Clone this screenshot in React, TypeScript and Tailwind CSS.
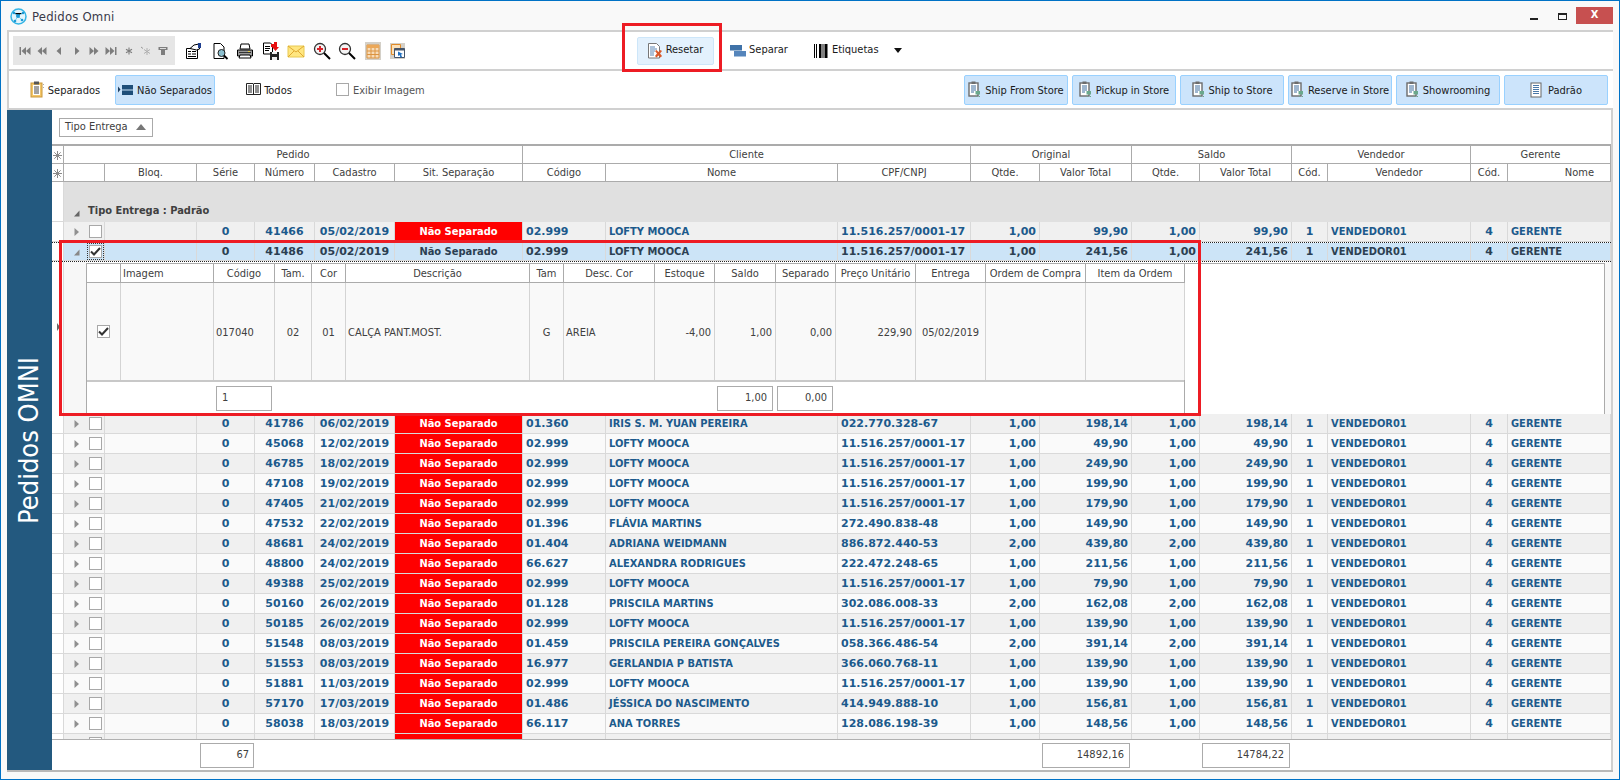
import React from "react";

const COLS = "grid grid-cols-[12px_41px_92px_58px_60px_80px_128px_83px_232px_133px_69px_92px_68px_92px_36px_143px_37px_103px]";
const DCOLS = "grid grid-cols-[34px_93px_61px_37px_34px_184px_34px_91px_60px_61px_60px_80px_70px_100px_99px]";
const FONT = "[font-family:'DejaVu_Sans_Condensed','DejaVu_Sans',sans-serif]";
const BOLD = "[font-family:'DejaVu_Sans','Liberation_Sans',sans-serif] font-bold text-[11px]";
const COND = "[font-family:'DejaVu_Sans_Condensed','DejaVu_Sans',sans-serif]";

type R = { n: string; d: string; c: string; nome: string; doc: string; q: string; v: string };
const LOFTY = { c: "02.999", nome: "LOFTY MOOCA", doc: "11.516.257/0001-17", q: "1,00" };
const ROWS: R[] = [
  { n: "41786", d: "06/02/2019", c: "01.360", nome: "IRIS S. M. YUAN PEREIRA", doc: "022.770.328-67", q: "1,00", v: "198,14" },
  { n: "45068", d: "12/02/2019", ...LOFTY, v: "49,90" },
  { n: "46785", d: "18/02/2019", ...LOFTY, v: "249,90" },
  { n: "47108", d: "19/02/2019", ...LOFTY, v: "199,90" },
  { n: "47405", d: "21/02/2019", ...LOFTY, v: "179,90" },
  { n: "47532", d: "22/02/2019", c: "01.396", nome: "FLÁVIA MARTINS", doc: "272.490.838-48", q: "1,00", v: "149,90" },
  { n: "48681", d: "24/02/2019", c: "01.404", nome: "ADRIANA WEIDMANN", doc: "886.872.440-53", q: "2,00", v: "439,80" },
  { n: "48800", d: "24/02/2019", c: "66.627", nome: "ALEXANDRA RODRIGUES", doc: "222.472.248-65", q: "1,00", v: "211,56" },
  { n: "49388", d: "25/02/2019", ...LOFTY, v: "79,90" },
  { n: "50160", d: "26/02/2019", c: "01.128", nome: "PRISCILA MARTINS", doc: "302.086.008-33", q: "2,00", v: "162,08" },
  { n: "50185", d: "26/02/2019", ...LOFTY, v: "139,90" },
  { n: "51548", d: "08/03/2019", c: "01.459", nome: "PRISCILA PEREIRA GONÇALVES", doc: "058.366.486-54", q: "2,00", v: "391,14" },
  { n: "51553", d: "08/03/2019", c: "16.977", nome: "GERLANDIA P BATISTA", doc: "366.060.768-11", q: "1,00", v: "139,90" },
  { n: "51881", d: "11/03/2019", ...LOFTY, v: "139,90" },
  { n: "57170", d: "17/03/2019", c: "01.486", nome: "JÉSSICA DO NASCIMENTO", doc: "414.949.888-10", q: "1,00", v: "156,81" },
  { n: "58038", d: "18/03/2019", c: "66.117", nome: "ANA TORRES", doc: "128.086.198-39", q: "1,00", v: "148,56" },
  { n: "58116", d: "19/03/2019", ...LOFTY, v: "139,90" },
];

const Nav = ({ k }: { k: string }) => {
  const c = "#7d7d7d";
  return (
    <svg width="12" height="10" viewBox="0 0 12 10" className="shrink-0">
      {k === "first" && <><rect x="0.5" y="1" width="1.5" height="8" fill={c} /><path d="M7 1v8L2.5 5zM11.5 1v8L7 5z" fill={c} /></>}
      {k === "prev2" && <path d="M6 1v8L1.5 5zM10.5 1v8L6 5z" fill={c} />}
      {k === "prev" && <path d="M8 1v8L3.5 5z" fill={c} />}
      {k === "next" && <path d="M4 1v8L8.5 5z" fill={c} />}
      {k === "next2" && <path d="M1.5 1v8L6 5zM6 1v8L10.5 5z" fill={c} />}
      {k === "last" && <><path d="M0.5 1v8L5 5zM5 1v8L9.5 5z" fill={c} /><rect x="10" y="1" width="1.5" height="8" fill={c} /></>}
      {k === "star" && <path d="M6 1.500v7M3 3.200l6 3.600M9 3.200l-6 3.600" stroke={c} strokeWidth="1.100" />}
      {k === "star2" && <><path d="M7 2v7M4 3.500l6 4M10 3.500l-6 4" stroke="#b0b0b0" strokeWidth="1" /><path d="M1 1l2 1.500" stroke="#999" /></>}
      {k === "filter" && <><path d="M1.500 1h9v3h-2.500v5h-4v-5h-2.500z" fill={c} /><rect x="3" y="2" width="6" height="1" fill="#dcdcdc" /></>}
    </svg>
  );
};

const Tool = ({ k }: { k: number }) => (
  <svg width="18" height="18" viewBox="0 0 18 18" className="shrink-0">
    {k === 0 && <>
      <path d="M1.500 6.500h11v10h-11z" fill="#fff" stroke="#000" />
      <path d="M3 9h3v1H3zM7 9h4v1H7zM3 11.500h3v1H3zM7 11.500h4v1H7zM3 14h8v1H3z" fill="#000" />
      <path d="M5 6.500L9 3l5-1 .5 5-3 1z" fill="#fff" stroke="#000" />
      <path d="M13 1h3v5h-3z" fill="#1f3f8f" />
    </>}
    {k === 1 && <>
      <path d="M3 1.500h6.500l3.500 3.500v11.500H3z" fill="#fff" stroke="#000" />
      <circle cx="10.500" cy="11" r="3.500" fill="#8cc0d0" stroke="#222" />
      <path d="M13 13.500l3.500 3.500" stroke="#000" strokeWidth="1.800" />
    </>}
    {k === 2 && <>
      <path d="M5 2h8l1 5H4z" fill="#fff" stroke="#000" />
      <path d="M1.500 8h15v6h-15z" fill="#9a9a9a" stroke="#000" />
      <path d="M4 13h10l1 3H3z" fill="#fff" stroke="#000" />
      <path d="M3 10h12v1H3z" fill="#333" />
      <rect x="12" y="9" width="2" height="1" fill="#e8d040" />
    </>}
    {k === 3 && <>
      <path d="M1.500 1h7l2 2v9h-9z" fill="#fff" stroke="#000" />
      <path d="M3 4h5v1H3zM3 6h5v1H3zM3 8h4v1H3z" fill="#000" />
      <path d="M9 2h3V0h3v5h2l-3.500 4L10 5h-1z" fill="#e81010" />
      <path d="M8 10h9v8H8z" fill="#222" />
      <path d="M10 10h5v2h-5zM10 15h5v3h-5z" fill="#eee" />
    </>}
    {k === 4 && <>
      <path d="M1 4h16v11H1z" fill="#ffe680" stroke="#e8c850" />
      <path d="M1 4l8 6 8-6M1 15l6-6M17 15l-6-6" fill="none" stroke="#e0a830" />
    </>}
    {(k === 5 || k === 6) && <>
      <circle cx="7" cy="7" r="5.500" fill="#f4f4f4" stroke="#333" strokeWidth="1.300" />
      <path d="M11 11l6 6" stroke="#000" strokeWidth="2" />
      <path d="M4 6h6v2H4z" fill="#d8232a" />
      {k === 5 && <path d="M6 4h2v6H6z" fill="#d8232a" />}
    </>}
    {k === 7 && <>
      <rect x="1" y="0" width="16" height="18" fill="#d4d0c8" />
      <path d="M3 3h12v13H3z" fill="#f8dcb8" stroke="#dc9440" />
      <path d="M3 3h12v3H3z" fill="#eca858" />
      <path d="M3 9h12M3 12.500h12M7 6v10M11 6v10" stroke="#dc9440" />
    </>}
    {k === 8 && <>
      <rect x="1" y="1" width="15" height="16" fill="#d4d0c8" />
      <path d="M2.500 2.500h9v10h-9z" fill="#fbe0b8" stroke="#e08a28" />
      <path d="M5.500 6.500h10v9h-10z" fill="#fff" stroke="#44546a" />
      <path d="M5.500 6.500h10v2h-10z" fill="#44546a" />
      <path d="M9 9.500l5 2.500-2 .5 1 2.500-1.500.5-1-2.500-1.500 1z" fill="#1f6fc0" />
    </>}
  </svg>
);

const Clip = () => (
  <svg width="15" height="17" viewBox="0 0 15 17" className="shrink-0">
    <rect x="1" y="2" width="11" height="14" fill="#f3c668" stroke="#c9973a" />
    <rect x="3" y="4" width="7" height="10" fill="#fff" />
    <path d="M4 6h5M4 8h5M4 10h5M4 12h5" stroke="#444" />
    <path d="M4 .5h5v3H4z" fill="#555" />
    <path d="M13.500 3v1M13.500 6v1" stroke="#aaa" />
  </svg>
);

const Bars = () => (
  <svg width="16" height="12" viewBox="0 0 16 12" className="shrink-0">
    <path d="M0 2.500l2.500 3-2.500 3z" fill="#1f3f5f" />
    <rect x="4" y="1" width="11" height="4.500" fill="#1e4e79" />
    <rect x="4" y="6.500" width="11" height="4.500" fill="#1e4e79" />
  </svg>
);

const Book = () => (
  <svg width="15" height="13" viewBox="0 0 15 13" className="shrink-0">
    <path d="M.5.5h6.500l.5.5.5-.5h6.500v11h-14z" fill="#fff" stroke="#222" />
    <path d="M2 3h4M2 5h4M2 7h4M2 9h4M9 3h4M9 5h4M9 7h4M9 9h4M7.500 1v11" stroke="#222" />
  </svg>
);

const StoreIcon = () => (
  <svg width="14" height="17" viewBox="0 0 14 17" className="shrink-0">
    <rect x="1" y="2" width="9" height="13" fill="#fff" stroke="#6c6c6c" strokeWidth="1.400" />
    <rect x="3.500" y="0.500" width="4" height="2.500" fill="#6c6c6c" />
    <path d="M3 5h5M3 7h5M3 9h5M3 11h3" stroke="#3f6f9f" />
    <rect x="7.500" y="10" width="4.500" height="3.500" fill="#6aa88c" />
    <path d="M8 15.500h1M11 15.500h1" stroke="#6aa88c" strokeWidth="1.200" />
  </svg>
);

const DocIcon = () => (
  <svg width="12" height="16" viewBox="0 0 12 16" className="shrink-0">
    <rect x="1" y="1" width="10" height="14" fill="#fff" stroke="#666" />
    <path d="M3 3.500h6M3 5.500h6M3 7.500h6M3 9.500h6M3 11.500h6" stroke="#4a78a8" />
  </svg>
);

const Reset = () => (
  <svg width="15" height="16" viewBox="0 0 15 16" className="shrink-0">
    <path d="M.5.5h8l3 3v11.500H.5z" fill="#fff" stroke="#777" />
    <path d="M2 4h5M2 6h7M2 8h5M2 10h4M2 12h4" stroke="#5b86b5" />
    <path d="M7 8l1.500-1 2 2 2-2L14 8l-2 2.500 2 2.500-1.500 1.500-2-2-2 2L7 13l2-2.500z" fill="#d9592a" />
  </svg>
);

const Separar = () => (
  <svg width="16" height="12" viewBox="0 0 16 12" className="shrink-0">
    <rect x="0" y="0" width="12" height="5.500" fill="#3f72a8" />
    <rect x="4" y="6" width="12" height="5.500" fill="#5585bb" />
  </svg>
);

const Barcode = () => (
  <svg width="14" height="14" viewBox="0 0 14 14" className="shrink-0">
    <path d="M0 0h1v14H0zM2 0h1v14H2zM5 0h2.500v14H5zM8.500 0h1v14h-1zM10.500 0h3v14h-3z" fill="#000" />
  </svg>
);

const Chevron = ({ open, dark }: { open?: boolean; dark?: boolean }) => (
  <svg width="6" height="8" viewBox="0 0 6 8" className="shrink-0">
    {open ? <path d="M5.500 1.500v6H0z" fill={dark ? "#666" : "#888"} /> : <path d="M.5 0l4.500 4-4.500 4z" fill="#909090" />}
  </svg>
);

const Check = ({ checked, focus }: { checked?: boolean; focus?: boolean }) => (
  <span className={`flex h-[13px] w-[13px] shrink-0 items-center justify-center border border-[#a8a8a8] bg-white ${focus ? "outline outline-1 outline-offset-1 outline-dotted outline-[#333]" : ""}`}>
    {checked && (
      <svg width="11" height="9" viewBox="0 0 11 9"><path d="M1 4.500l3 3 6-6.500" fill="none" stroke="#333" strokeWidth="2" /></svg>
    )}
  </span>
);

const Snow = () => (
  <svg width="9" height="9" viewBox="0 0 9 9">
    <path d="M4.500 0v9M0 4.500h9M1.300 1.300l6.400 6.400M7.700 1.300l-6.400 6.400" stroke="#8a8a8a" strokeWidth="1" />
  </svg>
);

const H = ({ children, className = "" }: { children?: React.ReactNode; className?: string }) => (
  <div className={`flex h-[18px] items-center justify-center border-r border-b border-[#ababab] bg-white pt-[1px] leading-[14px] text-[#404040] ${className}`}>{children}</div>
);

const Cell = ({ children, a = "r", className = "" }: { children?: React.ReactNode; a?: "l" | "r" | "c"; className?: string }) => (
  <div className={`flex h-full items-center overflow-hidden whitespace-nowrap border-r border-b border-[#d9d9d9] pt-[2px] ${a === "r" ? "justify-end pr-[3px]" : a === "c" ? "justify-center" : "justify-start pl-[3px]"} ${className}`}>{children}</div>
);

function Row({ r, alt, sel, open }: { r: R; alt: boolean; sel?: boolean; open?: boolean }) {
  const bg = sel ? "bg-[#cce4f7]" : alt ? "bg-[#f0f0f0]" : "bg-[#fafafa]";
  const txt = sel ? "text-[#2b3f52]" : "text-[#1c5a8c]";
  return (
    <div className={`${COLS} relative h-[20px] shrink-0 ${BOLD} ${txt} ${sel ? "border-y border-dotted border-[#222]" : ""}`}>
      <div className="h-full border-r border-b border-[#d9d9d9] bg-white" />
      <div className={`flex h-full items-center border-r border-b border-[#d9d9d9] ${bg}`}>
        <span className="ml-[10px] mr-[9px] flex w-[6px]"><Chevron open={open} /></span>
        <Check checked={sel} focus={sel} />
      </div>
      <Cell className={bg} />
      <Cell a="c" className={bg}>0</Cell>
      <Cell a="c" className={bg}>{r.n}</Cell>
      <Cell a="c" className={bg}>{r.d}</Cell>
      {sel ? <Cell a="c" className={`${bg} ${COND}`}>Não Separado</Cell> : <Cell a="c" className={`bg-[#ff0000] text-white ${COND}`}>Não Separado</Cell>}
      <Cell a="l" className={bg}>{r.c}</Cell>
      <Cell a="l" className={`${bg} ${COND}`}>{r.nome}</Cell>
      <Cell a="l" className={bg}>{r.doc}</Cell>
      <Cell className={bg}>{r.q}</Cell>
      <Cell className={bg}>{r.v}</Cell>
      <Cell className={bg}>{r.q}</Cell>
      <Cell className={bg}>{r.v}</Cell>
      <Cell a="c" className={bg}>1</Cell>
      <Cell a="l" className={`${bg} ${COND}`}>VENDEDOR01</Cell>
      <Cell a="c" className={bg}>4</Cell>
      <Cell a="l" className={`${bg} ${COND}`}>GERENTE</Cell>
    </div>
  );
}

const DH = ({ children, a = "c" }: { children?: React.ReactNode; a?: "c" | "l" }) => (
  <div className={`flex h-[19px] items-center border-r border-b border-[#ababab] bg-white pt-[1px] leading-[14px] text-[#404040] ${a === "c" ? "justify-center" : "justify-start pl-[2px]"}`}>{children}</div>
);

const DC = ({ children, a = "c", plain }: { children?: React.ReactNode; a?: "c" | "l" | "r"; plain?: boolean }) => (
  <div className={`flex h-full items-center border-r border-[#d4d4d4] text-[#404040] ${plain ? "" : "pt-[3px]"} ${a === "c" ? "justify-center" : a === "l" ? "justify-start pl-[2px]" : "justify-end pr-[3px]"}`}>{children}</div>
);

const Box = ({ children, className = "" }: { children: React.ReactNode; className?: string }) => (
  <div className={`flex h-[25px] shrink-0 items-center border border-[#ababab] bg-white pt-px text-[#404040] ${className}`}>{children}</div>
);

function Detail() {
  return (
    <div className="flex h-[152px] shrink-0 bg-white">
      <div className="relative w-[12px] shrink-0 border-r border-[#d9d9d9] bg-white">
        <svg width="3" height="8" viewBox="0 0 3 8" className="absolute left-[5px] top-[61px]"><path d="M0 0l3 4-3 4z" fill="#666" /></svg>
      </div>
      <div className="w-[22px] shrink-0 bg-[#f7f7f7]" />
      <div className="mt-px flex h-full w-[1519px] shrink-0 border-x border-t border-b border-[#ababab] bg-white">
        <div className="flex w-[1098px] shrink-0 flex-col border-r border-[#ababab]">
          <div className={`${DCOLS} h-[19px] shrink-0`}>
            <DH />
            <DH a="l">Imagem</DH>
            <DH>Código</DH>
            <DH>Tam.</DH>
            <DH>Cor</DH>
            <DH>Descrição</DH>
            <DH>Tam</DH>
            <DH>Desc. Cor</DH>
            <DH>Estoque</DH>
            <DH>Saldo</DH>
            <DH>Separado</DH>
            <DH>Preço Unitário</DH>
            <DH>Entrega</DH>
            <DH>Ordem de Compra</DH>
            <DH>Item da Ordem</DH>
          </div>
          <div className={`${DCOLS} h-[99px] shrink-0 border-b-2 border-[#c8c8c8] bg-[#f9f9f9]`}>
            <DC plain><Check checked /></DC>
            <DC />
            <DC a="l">017040</DC>
            <DC>02</DC>
            <DC>01</DC>
            <DC a="l">CALÇA PANT.MOST.</DC>
            <DC>G</DC>
            <DC a="l">AREIA</DC>
            <DC a="r">-4,00</DC>
            <DC a="r">1,00</DC>
            <DC a="r">0,00</DC>
            <DC a="r">229,90</DC>
            <DC>05/02/2019</DC>
            <DC />
            <DC />
          </div>
          <div className="flex flex-1 items-center">
            <Box className="ml-[129px] w-[56px] justify-start pl-[5px]">1</Box>
            <Box className="ml-[445px] w-[56px] justify-end pr-[5px]">1,00</Box>
            <Box className="ml-[4px] w-[56px] justify-end pr-[5px]">0,00</Box>
          </div>
        </div>
      </div>
      <div className="flex-1 bg-[#f7f7f7]" />
    </div>
  );
}

const Toggle = ({ icon, label, active, className = "" }: { icon: React.ReactNode; label: string; active?: boolean; className?: string }) => (
  <div className={`flex h-[30px] shrink-0 items-center justify-center gap-[3px] whitespace-nowrap rounded-[2px] border text-[11px] text-[#1a1a1a] ${active ? "border-[#99d1ff] bg-[#cce4fb]" : "border-transparent"} ${className}`}>
    {icon}<span className="mt-[4px]">{label}</span>
  </div>
);

export default function App() {
  const sel: R = { n: "41486", d: "05/02/2019", ...LOFTY, v: "241,56" };
  const first: R = { n: "41466", d: "05/02/2019", ...LOFTY, v: "99,90" };
  return (
    <div className={`relative flex h-[780px] w-[1620px] flex-col overflow-hidden border border-[#0072c6] bg-[#f9f9f9] text-[11px] ${FONT}`}>
      {/* title bar */}
      <div className="flex h-[29px] shrink-0 items-center">
        <svg width="17" height="17" viewBox="0 0 17 17" className="ml-[9px] mt-[2px] shrink-0">
          <circle cx="8.500" cy="8.500" r="7.500" fill="#e4f5fc" stroke="#35b5e5" strokeWidth="1.500" />
          <path d="M4 5l4 3 5-3M8 8l-3 5M8 8l4 4" stroke="#7fd0ee" strokeWidth="1" />
          <circle cx="8" cy="8" r="2" fill="#1d9ad6" />
          <circle cx="4" cy="5" r="1.300" fill="#1d9ad6" />
          <circle cx="13" cy="5" r="1.300" fill="#1d9ad6" />
          <circle cx="5" cy="13" r="1.300" fill="#1d9ad6" />
          <circle cx="12" cy="12" r="1.300" fill="#1d9ad6" />
        </svg>
        <span className="ml-[5px] mt-[2px] text-[13px] tracking-[0.2px] text-[#3a3a4a]">Pedidos Omni</span>
        <div className="ml-auto mr-[6px] flex h-[17px] items-center">
          <span className="mt-[6px] h-[2px] w-[8px] bg-[#222]" />
          <span className="ml-[20px] mt-[1px] h-[7px] w-[9px] border border-t-2 border-[#222]" />
          <span className="ml-[9px] flex h-[17px] w-[37px] items-center justify-center bg-[#c75050] text-[11px] font-bold text-white">X</span>
        </div>
      </div>
      {/* toolbar 1 */}
      <div className="mx-[6px] flex h-[41px] w-[1606px] shrink-0 items-center border-y-2 border-l-2 border-[#d0d0d0] bg-white">
        <div className="ml-[4px] flex h-[29px] w-[162px] shrink-0 items-center justify-between bg-[#e6e6e6] px-[3px]">
          {["first", "prev2", "prev", "next", "next2", "last", "star", "star2", "filter"].map((k) => <span key={k} className="flex w-[18px] justify-center"><Nav k={k} /></span>)}
        </div>
        <div className="ml-[10px] flex w-[222px] shrink-0 justify-between">
          {[0, 1, 2, 3, 4, 5, 6, 7, 8].map((k) => <Tool key={k} k={k} />)}
        </div>
        <div className="ml-[230px] flex h-[28px] w-[77px] shrink-0 items-center justify-center gap-[3px] rounded-[2px] border border-[#cde6f9] bg-[#e3f1fd] text-[11px] text-[#1a1a1a]"><Reset /><span>Resetar</span></div>
        <div className="ml-[16px] flex shrink-0 items-center gap-[3px] text-[11px] text-[#1a1a1a]"><Separar /><span>Separar</span></div>
        <div className="ml-[26px] flex shrink-0 items-center gap-[4px] text-[11px] text-[#1a1a1a]"><Barcode /><span>Etiquetas</span></div>
        <svg width="8" height="5" viewBox="0 0 8 5" className="ml-[15px] shrink-0"><path d="M0 0h8L4 5z" fill="#111" /></svg>
      </div>
      {/* toolbar 2 */}
      <div className="mx-[6px] flex h-[39px] w-[1606px] shrink-0 items-center border-b-2 border-l-2 border-[#d0d0d0] bg-white">
        <Toggle icon={<Clip />} label="Separados" className="ml-[20px] w-[72px]" />
        <Toggle icon={<Bars />} label="Não Separados" active className="ml-[14px] w-[100px]" />
        <Toggle icon={<Book />} label="Todos" className="ml-[30px] w-[48px]" />
        <div className="ml-[43px] flex shrink-0 items-center gap-[4px] text-[#555]">
          <span className="h-[13px] w-[13px] border border-[#a8a8a8] bg-white" />
          <span className="mt-[4px] text-[11px]">Exibir Imagem</span>
        </div>
        <div className="ml-auto mr-[5px] flex gap-[4px]">
          {["Ship From Store", "Pickup in Store", "Ship to Store", "Reserve in Store", "Showrooming"].map((l) => <Toggle key={l} icon={<StoreIcon />} label={l} active className="w-[104px] border-[#99ccf3]" />)}
          <Toggle icon={<DocIcon />} label="Padrão" active className="w-[104px] gap-[6px] border-[#99ccf3]" />
        </div>
      </div>
      {/* body */}
      <div className="mx-[6px] flex h-[662px] w-[1606px] shrink-0 border-b-2 border-[#b8b8b8]">
        <div className="flex w-[45px] shrink-0 items-center justify-center bg-[#23597f]">
          <span className="rotate-180 whitespace-nowrap text-[27px] text-white [writing-mode:vertical-rl]">Pedidos OMNI</span>
        </div>
        <div className="flex min-w-0 flex-1 flex-col border-r-2 border-[#d0d0d0] bg-white">
          <div className="flex h-[34px] shrink-0 items-center">
            <div className="ml-[7px] flex h-[19px] w-[94px] items-center justify-between border border-[#aaa] px-[5px] text-[11px] text-[#404040]">
              <span>Tipo Entrega</span>
              <svg width="10" height="6" viewBox="0 0 10 6" className="mr-[1px]"><path d="M5 0l5 6H0z" fill="#777" /></svg>
            </div>
          </div>
          {/* grid */}
          <div className="flex h-[596px] shrink-0 flex-col overflow-hidden border-t-2 border-b border-[#ababab] border-b-[#b0b0b0]">
            <div className={`${COLS} h-[18px] shrink-0`}>
              <H><Snow /></H>
              <H className="col-span-6">Pedido</H>
              <H className="col-span-3">Cliente</H>
              <H className="col-span-2">Original</H>
              <H className="col-span-2">Saldo</H>
              <H className="col-span-2">Vendedor</H>
              <H className="col-span-2">Gerente</H>
            </div>
            <div className={`${COLS} h-[18px] shrink-0`}>
              <H><Snow /></H>
              <H />
              <H>Bloq.</H>
              <H>Série</H>
              <H>Número</H>
              <H>Cadastro</H>
              <H>Sit. Separação</H>
              <H>Código</H>
              <H>Nome</H>
              <H>CPF/CNPJ</H>
              <H>Qtde.</H>
              <H>Valor Total</H>
              <H>Qtde.</H>
              <H>Valor Total</H>
              <H>Cód.</H>
              <H>Vendedor</H>
              <H>Cód.</H>
              <H className="justify-end pr-[16px]">Nome</H>
            </div>
            <div className="flex h-[40px] shrink-0">
              <div className="w-[12px] shrink-0 border-r border-b border-[#d9d9d9] bg-white" />
              <div className={`flex w-[1547px] shrink-0 items-end bg-[#e0e0e0] pb-[2px] ${BOLD} ${COND} text-[#404040]`}>
                <span className="mb-[3px] ml-[10px] mr-[8px]"><Chevron open dark /></span>
                <span className="mb-[1px]">Tipo Entrega : Padrão</span>
              </div>
            </div>
            <Row r={first} alt />
            <Row r={sel} alt sel open />
            <Detail />
            {ROWS.map((r, i) => <Row key={r.n} r={r} alt={i % 2 === 0} />)}
          </div>
          {/* footer */}
          <div className="flex h-[30px] shrink-0 items-center">
            <Box className="ml-[148px] w-[54px] justify-end pr-[4px]">67</Box>
            <Box className="ml-[788px] w-[88px] justify-end pr-[5px]">14892,16</Box>
            <Box className="ml-[72px] w-[88px] justify-end pr-[5px]">14784,22</Box>
          </div>
        </div>
      </div>
      {/* red highlights drawn over the screen */}
      <div className="pointer-events-none absolute left-[621px] top-[22px] h-[49px] w-[100px] border-[3px] border-[#ed1c24]" />
      <div className="pointer-events-none absolute left-[58px] top-[239px] h-[176px] w-[1142px] border-[3px] border-[#ed1c24]" />
    </div>
  );
}
